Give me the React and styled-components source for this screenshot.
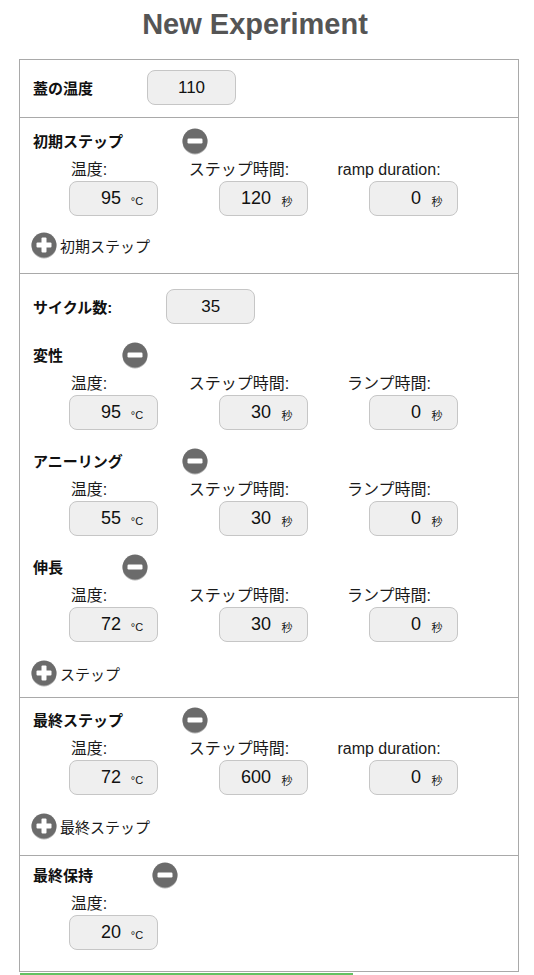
import React from "react";
import styled, { createGlobalStyle } from "styled-components";

const GlobalStyle = createGlobalStyle`
  * { box-sizing: border-box; }
  body {
    margin: 0;
    background: #fff;
    font-family: "Liberation Sans", "Noto Sans CJK JP", sans-serif;
    color: #1a1a1a;
  }
`;

const CircleIcon = ({ type }) => (
  <IconSvg width="26" height="26" viewBox="0 0 26 26">
    <circle cx="13" cy="13" r="12.5" fill="#6b6b6b" />
    {type === "minus" ? (
      <rect x="5.5" y="10.5" width="15" height="5" rx="1.2" fill="#fff" />
    ) : (
      <>
        <rect x="5.5" y="10.5" width="15" height="5" rx="1" fill="#fff" />
        <rect x="10.5" y="5.5" width="5" height="15" rx="1" fill="#fff" />
      </>
    )}
  </IconSvg>
);

const Field = ({ label, value, unit }) => (
  <FieldCell>
    <FieldLabel>{label}</FieldLabel>
    <ValueBox>
      <Num>{value}</Num>
      <Unit>{unit}</Unit>
    </ValueBox>
  </FieldCell>
);

const Step = ({ name, temp, time, rampLabel = "ランプ時間:", ramp = "0", only }) => (
  <StepBlock>
    <StepHeader>
      <HeadLabel>{name}</HeadLabel>
      <MinusButton>
        <CircleIcon type="minus" />
      </MinusButton>
    </StepHeader>
    <FieldRow>
      <Field label="温度:" value={temp} unit="°C" />
      {!only && <Field label="ステップ時間:" value={time} unit="秒" />}
      {!only && <Field label={rampLabel} value={ramp} unit="秒" />}
    </FieldRow>
  </StepBlock>
);

const AddRow = ({ children }) => (
  <AddButton>
    <CircleIcon type="plus" />
    <span>{children}</span>
  </AddButton>
);

export default function App() {
  return (
    <Page>
      <GlobalStyle />
      <Title>New Experiment</Title>
      <Panel>
        <Section $pt={10} $pb={12}>
          <InlineRow>
            <HeadLabel>蓋の温度</HeadLabel>
            <CenterBox>110</CenterBox>
          </InlineRow>
        </Section>

        <Section $pt={10} $pb={15} $gap={16}>
          <Step name="初期ステップ" temp="95" time="120" rampLabel="ramp duration:" />
          <AddRow>初期ステップ</AddRow>
        </Section>

        <Section $pt={15} $pb={11} $gap={18}>
          <InlineRow>
            <HeadLabel>サイクル数:</HeadLabel>
            <CenterBox>35</CenterBox>
          </InlineRow>
          <Step name="変性" temp="95" time="30" />
          <Step name="アニーリング" temp="55" time="30" />
          <Step name="伸長" temp="72" time="30" />
          <AddRow>ステップ</AddRow>
        </Section>

        <Section $pt={9} $pb={16} $gap={18}>
          <Step name="最終ステップ" temp="72" time="600" rampLabel="ramp duration:" />
          <AddRow>最終ステップ</AddRow>
        </Section>

        <Section $pt={6} $pb={21}>
          <Step name="最終保持" temp="20" only />
        </Section>
      </Panel>
      <Progress />
    </Page>
  );
}

const Page = styled.div`
  width: 534px;
`;

const Title = styled.h1`
  margin: 0;
  height: 59px;
  padding: 10px 24px 0 0;
  text-align: center;
  font-size: 29px;
  line-height: 29px;
  font-weight: 700;
  color: #555;
`;

const Panel = styled.div`
  margin-left: 19px;
  width: 500px;
  border: 1px solid #a9a9a9;
`;

const Section = styled.div`
  display: flex;
  flex-direction: column;
  gap: ${(p) => p.$gap || 0}px;
  padding: ${(p) => p.$pt}px 0 ${(p) => p.$pb}px;
  & + & {
    border-top: 1px solid #a9a9a9;
  }
`;

const InlineRow = styled.div`
  display: flex;
  align-items: center;
  padding-left: 13px;
`;

const HeadLabel = styled.span`
  font-size: 15px;
  font-weight: 700;
  color: #111;
  line-height: 18px;
  padding-top: 2px;
`;

const BoxBase = styled.div`
  width: 89px;
  height: 35px;
  border: 1px solid #c6c6c6;
  border-radius: 8px;
  background: #efefef;
  display: flex;
  align-items: center;
  font-size: 18px;
  color: #111;
`;

const CenterBox = styled(BoxBase)`
  justify-content: center;
  margin-left: 54px;
  font-size: 17px;
`;

const ValueBox = styled(BoxBase)`
  align-self: flex-end;
  padding-right: 4px;
`;

const Num = styled.span`
  flex: 1;
  text-align: right;
`;

const Unit = styled.span`
  width: 32px;
  text-align: center;
  font-size: 11px;
  padding-top: 4px;
`;

const StepBlock = styled.div`
  display: flex;
  flex-direction: column;
`;

const StepHeader = styled.div`
  display: flex;
  align-items: center;
  height: 26px;
  padding-left: 13px;
`;

const MinusButton = styled.span`
  display: flex;
  margin-left: 59px;
`;

const IconSvg = styled.svg`
  display: block;
  filter: drop-shadow(0.5px 1px 0.6px rgba(0, 0, 0, 0.3));
`;

const FieldRow = styled.div`
  display: grid;
  grid-template-columns: repeat(3, 138px);
  column-gap: 12px;
  margin-top: 7px;
`;

const FieldCell = styled.div`
  display: flex;
  flex-direction: column;
  gap: 2px;
`;

const FieldLabel = styled.div`
  font-size: 16px;
  line-height: 18px;
  text-align: center;
  color: #1a1a1a;
  white-space: nowrap;
`;

const AddButton = styled.div`
  display: flex;
  align-items: center;
  gap: 3px;
  padding-left: 11px;
  font-size: 15px;
  color: #1a1a1a;
`;

const Progress = styled.div`
  margin: 1px 0 0 20px;
  width: 333px;
  height: 2px;
  background: #62c162;
`;
